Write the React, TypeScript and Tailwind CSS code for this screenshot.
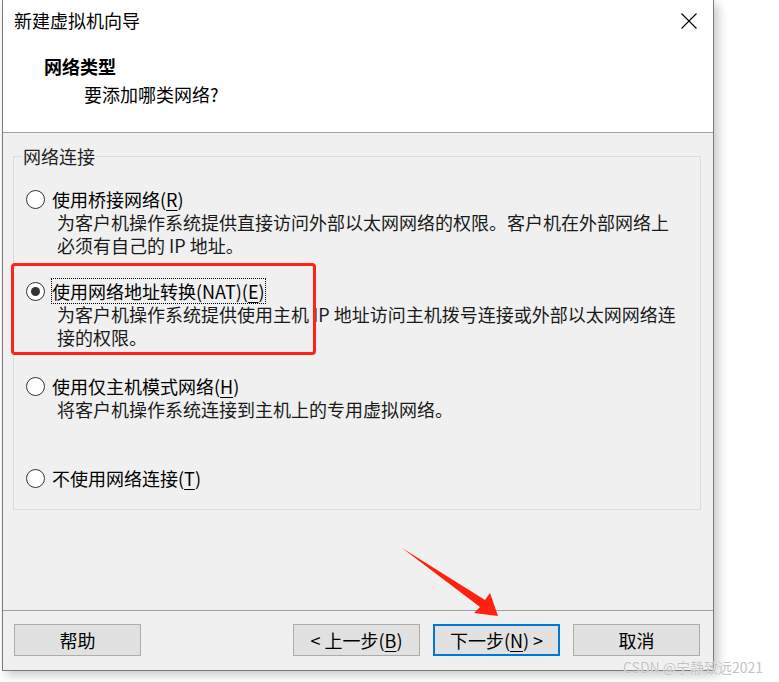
import React from "react";

type Option = {
  label: string;
  key: string;
  suffix?: string;
  desc: string[];
  checked?: boolean;
  focused?: boolean;
  gap: string;
};

const options: Option[] = [
  {
    label: "使用桥接网络(",
    key: "R",
    suffix: ")",
    desc: [
      "为客户机操作系统提供直接访问外部以太网网络的权限。客户机在外部网络上",
      "必须有自己的 IP 地址。",
    ],
    gap: "mt-[20px]",
  },
  {
    label: "使用网络地址转换(NAT)(",
    key: "E",
    suffix: ")",
    desc: [
      "为客户机操作系统提供使用主机 IP 地址访问主机拨号连接或外部以太网网络连",
      "接的权限。",
    ],
    checked: true,
    focused: true,
    gap: "mt-[22px]",
  },
  {
    label: "使用仅主机模式网络(",
    key: "H",
    suffix: ")",
    desc: ["将客户机操作系统连接到主机上的专用虚拟网络。"],
    gap: "mt-[25px]",
  },
  {
    label: "不使用网络连接(",
    key: "T",
    suffix: ")",
    desc: [],
    gap: "mt-[45px]",
  },
];

const Radio = ({ checked }: { checked?: boolean }) => (
  <span className="w-[19px] h-[19px] rounded-full border border-[#333333] bg-white flex items-center justify-center shrink-0">
    {checked && <span className="w-[9px] h-[9px] rounded-full bg-[#333333]" />}
  </span>
);

const Button = ({
  children,
  primary,
}: {
  children: React.ReactNode;
  primary?: boolean;
}) => (
  <button
    className={
      primary
        ? "w-[127px] h-[32px] bg-[#e1e1e1] border-2 border-[#0078d7] text-[18px] leading-[24px] text-black"
        : "w-[127px] h-[32px] bg-[#e1e1e1] border border-[#adadad] text-[18px] leading-[24px] text-black"
    }
  >
    {children}
  </button>
);

export default function App() {
  return (
    <div className="relative w-[779px] h-[682px] bg-white overflow-hidden font-['Noto_Sans_CJK_SC','Noto_Sans',sans-serif] text-black">
      <div className="ml-[2px] w-[712px] h-[671px] border-x border-b border-[#7a7a7a] shadow-[4px_4px_10px_rgba(0,0,0,0.22)] flex flex-col">
        {/* header */}
        <div className="relative h-[133px] bg-white border-b border-[#a0a0a0] pt-[8px]">
          <div className="pl-[11px] text-[18px] leading-[24px]">新建虚拟机向导</div>
          <div className="mt-[22px] pl-[41px] text-[18px] leading-[24px] font-bold">网络类型</div>
          <div className="mt-[4px] pl-[81px] text-[18px] leading-[24px]">要添加哪类网络?</div>
          <svg
            className="absolute left-[678px] top-[13px]"
            width="16"
            height="16"
            viewBox="0 0 16 16"
          >
            <path d="M0.5 0.5 L15.5 15.5 M15.5 0.5 L0.5 15.5" stroke="#000" strokeWidth="1.1" />
          </svg>
        </div>

        {/* body */}
        <div className="flex-1 bg-[#f0f0f0] border-b border-[#a0a0a0] pt-[12px]">
          <fieldset className="ml-[10px] w-[688px] h-[365px] border border-[#dcdcdc]">
            <legend className="ml-[8px] px-[1px] text-[18px] leading-[22px] text-[#222]">网络连接</legend>
            {options.map((o) => (
              <div key={o.key} className={`${o.gap} pl-[12px]`}>
                <div className="flex items-center gap-[7px] h-[24px]">
                  <Radio checked={o.checked} />
                  <span
                    className={
                      o.focused
                        ? "text-[18px] leading-[24px] outline outline-1 outline-dotted outline-black"
                        : "text-[18px] leading-[24px]"
                    }
                  >
                    {o.label}
                    <span className="underline underline-offset-[3px]">{o.key}</span>
                    {o.suffix}
                  </span>
                </div>
                {o.desc.map((d) => (
                  <div key={d} className="pl-[31px] text-[18px] leading-[23px] text-[#1a1a1a]">
                    {d}
                  </div>
                ))}
              </div>
            ))}
          </fieldset>
        </div>

        {/* footer */}
        <div className="h-[59px] bg-[#f0f0f0] flex items-start pt-[13px] pl-[11px] pr-[13px]">
          <Button>帮助</Button>
          <div className="flex-1" />
          <div className="flex gap-[13px]">
            <Button>
              &lt; 上一步(<span className="underline underline-offset-[3px]">B</span>)
            </Button>
            <Button primary>
              下一步(<span className="underline underline-offset-[3px]">N</span>) &gt;
            </Button>
            <Button>取消</Button>
          </div>
        </div>
      </div>

      {/* annotation: red highlight box */}
      <div className="absolute left-[11px] top-[263px] w-[305px] h-[92px] border-[3px] border-[#ff2418] rounded-[4px] pointer-events-none" />

      {/* annotation: red arrow */}
      <svg className="absolute left-0 top-0 pointer-events-none" width="779" height="682">
        <polygon
          points="402,548 485,600 490,593 498,616 474,613 480,607"
          fill="#ff2010"
        />
      </svg>

      {/* watermark */}
      <div className="absolute left-[623px] top-[657px] text-[14px] leading-[20px] text-[#c4c4c4] [text-shadow:0_0_1px_#fff] font-['Noto_Sans_CJK_SC',sans-serif]">
        CSDN @宁静致远2021
      </div>
    </div>
  );
}
